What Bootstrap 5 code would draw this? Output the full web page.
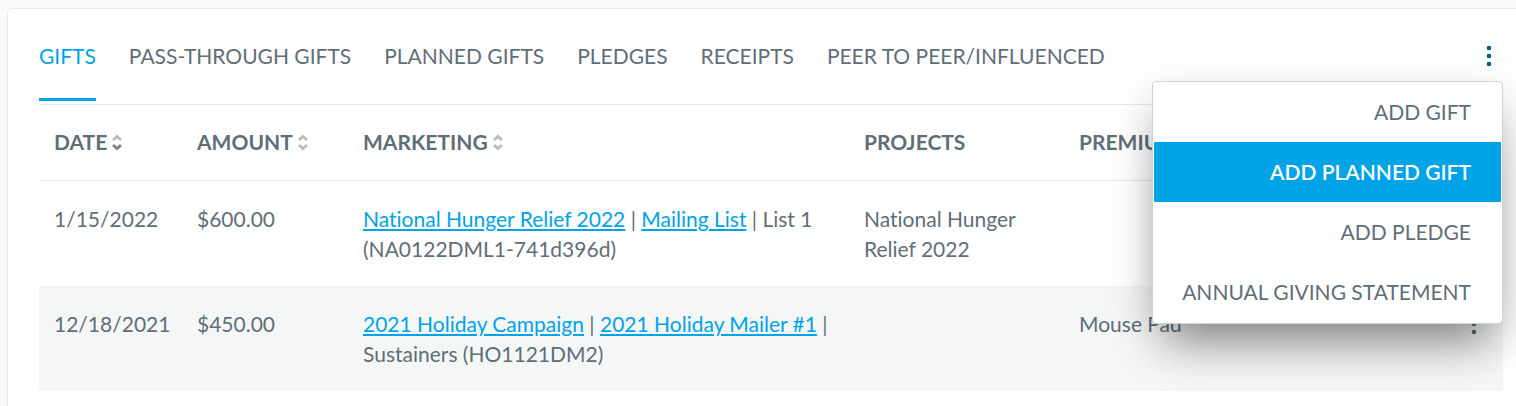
<!DOCTYPE html>
<html lang="en">
<head>
<meta charset="utf-8">
<meta name="viewport" content="width=device-width, initial-scale=1">
<title>Gifts</title>
<link rel="stylesheet" href="https://cdn.jsdelivr.net/npm/bootstrap@5.3.0/dist/css/bootstrap.min.css">
<style>
  body { font-family: Lato, sans-serif; font-size: 21px; line-height: 30px; font-variant-ligatures: none; color: #5f6e77; background: #fafafa; padding: 8px 0 0 7px; overflow-x: hidden; }
  /* the panel runs to the right edge of the window */
  .panel { border: 1px solid #ebebeb; border-right: 0; border-bottom: 0; border-radius: 5px 0 0 0; min-height: calc(100vh - 8px); padding: 0 13px 15px 31px; }
  .tabbar { border-bottom: 1px solid #e8eaea; padding-bottom: 3px; }
  .tabbar .nav { gap: 33px; }
  .tabbar .nav-link { color: #5f6e77; padding: 32px 0 27px; border-bottom: 3px solid transparent; }
  .tabbar .nav-link.active { color: #00a3e6; border-bottom-color: #00a3e6; }
  .dots { color: inherit; background: none; border: 0; padding: 0; width: 28px; height: 30px; display: flex; align-items: center; justify-content: center; }
  .tabbar .dots { color: #006080; margin-top: 32px; }
  .gift-table { table-layout: fixed; --bs-table-color: #5f6e77; --bs-table-bg: transparent; }
  .gift-table > :not(caption) > * > * { color: #5f6e77; padding: 23px 15px 22px; border: 0; vertical-align: top; }
  .gift-table > thead > tr > th { padding: 22px 15px 23px; border-bottom: 1px solid #e8eaea; font-weight: 700; white-space: nowrap; }
  .gift-table > tbody > tr:nth-child(even) > td { background: #f5f7f7; }
  .gift-table a { color: #00a3e6; }
  .sorter { background: none; border: 0; padding: 0; color: inherit; font-weight: inherit; display: flex; align-items: center; gap: 5px; }
  .c-date { width: 143px; }
  .c-amount { width: 166px; }
  .c-marketing { width: 501px; }
  .c-projects { width: 215px; }
  .c-actions { width: 58px; }
  .actions-menu { top: 72px; right: 0; border: 1px solid #cfd1d2; border-radius: 4px; padding: 0 1px 1px; font-size: 21px; box-shadow: 0 30px 45px -14px rgba(0,0,0,.42), 0 12px 45px rgba(0,0,0,.12); }
  .actions-menu .dropdown-item { color: #5f6e77; padding: 15px 30px 15px 28px; text-align: right; }
  .actions-menu .dropdown-item.active { color: #fff; background: #00a3e6; font-weight: 600; }
</style>
</head>
<body>
<svg class="d-none">
  <symbol id="kebab" viewBox="0 0 6 22"><circle cx="3" cy="3" r="2.3"/><circle cx="3" cy="11" r="2.3"/><circle cx="3" cy="19" r="2.3"/></symbol>
</svg>
<main class="panel bg-white">
  <div class="position-relative">
    <div class="tabbar d-flex justify-content-between align-items-start">
      <nav class="nav">
        <a class="nav-link active" aria-current="page" href="#">GIFTS</a>
        <a class="nav-link" href="#">PASS-THROUGH GIFTS</a>
        <a class="nav-link" href="#">PLANNED GIFTS</a>
        <a class="nav-link" href="#">PLEDGES</a>
        <a class="nav-link" href="#">RECEIPTS</a>
        <a class="nav-link" href="#">PEER TO PEER/INFLUENCED</a>
      </nav>
      <button class="dots" type="button" aria-label="Actions" aria-expanded="true"><svg width="6" height="22" fill="currentColor"><use href="#kebab"/></svg></button>
    </div>
    <div class="dropdown-menu actions-menu show">
      <a class="dropdown-item" href="#">ADD GIFT</a>
      <a class="dropdown-item active" href="#">ADD PLANNED GIFT</a>
      <a class="dropdown-item" href="#">ADD PLEDGE</a>
      <a class="dropdown-item" href="#">ANNUAL GIVING STATEMENT</a>
    </div>
  </div>
  <table class="table gift-table mb-0">
    <colgroup><col class="c-date"><col class="c-amount"><col class="c-marketing"><col class="c-projects"><col><col class="c-actions"></colgroup>
    <thead>
      <tr>
        <th scope="col"><button class="sorter" type="button">DATE <svg width="10" height="17" viewBox="0 0 10 17" fill="none" stroke-width="2.8"><path d="M1 6 5 2.4 9 6" stroke="#bbb"/><path d="M1 11 5 14.6 9 11" stroke="#808080"/></svg></button></th>
        <th scope="col"><button class="sorter" type="button">AMOUNT <svg width="10" height="17" viewBox="0 0 10 17" fill="none" stroke="#bbb" stroke-width="2.8"><path d="M1 6 5 2.4 9 6M1 11 5 14.6 9 11"/></svg></button></th>
        <th scope="col"><button class="sorter" type="button">MARKETING <svg width="10" height="17" viewBox="0 0 10 17" fill="none" stroke="#bbb" stroke-width="2.8"><path d="M1 6 5 2.4 9 6M1 11 5 14.6 9 11"/></svg></button></th>
        <th scope="col">PROJECTS</th>
        <th scope="col">PREMIUM</th>
        <th scope="col"></th>
      </tr>
    </thead>
    <tbody>
      <tr>
        <td>1/15/2022</td>
        <td>$600.00</td>
        <td><a href="#">National Hunger Relief 2022</a> | <a href="#">Mailing List</a> | List 1 (NA0122DML1-741d396d)</td>
        <td>National Hunger Relief 2022</td>
        <td></td>
        <td></td>
      </tr>
      <tr>
        <td>12/18/2021</td>
        <td>$450.00</td>
        <td><a href="#">2021 Holiday Campaign</a> | <a href="#">2021 Holiday Mailer #1</a> | Sustainers (HO1121DM2)</td>
        <td></td>
        <td>Mouse Pad</td>
        <td><button class="dots" type="button" aria-label="Gift actions"><svg width="6" height="22" fill="currentColor"><use href="#kebab"/></svg></button></td>
      </tr>
    </tbody>
  </table>
</main>
<script src="https://cdn.jsdelivr.net/npm/bootstrap@5.3.0/dist/js/bootstrap.bundle.min.js"></script>
</body>
</html>
